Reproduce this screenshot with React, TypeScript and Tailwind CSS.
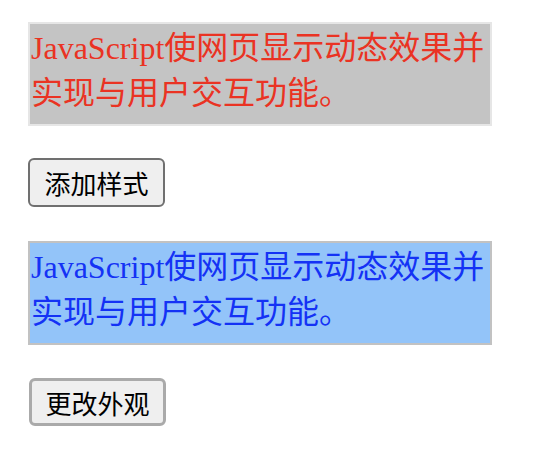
export default function App() {
  const serif = { fontFamily: '"Liberation Serif", "Noto Sans CJK SC", serif' };
  return (
    <div className="w-[556px] h-[450px] bg-white pl-[28px] pt-[22px] flex flex-col items-start">
      <div
        className="w-[464px] h-[104px] border-2 border-[#e6e6e6] bg-[#c4c4c4] text-[32px] leading-[45px] text-[#ea3323] px-[1px] pt-[2px] overflow-hidden"
        style={serif}
      >
        JavaScript使网页显示动态效果并实现与用户交互功能。
      </div>
      <button className="mt-[32px] w-[137px] h-[49px] flex items-center justify-center rounded-[6px] border-2 border-[#707070] bg-[#efefef] text-[26px] text-black font-['Noto_Sans_CJK_SC',sans-serif]">
        添加样式
      </button>
      <div
        className="mt-[34px] w-[464px] h-[104px] border-2 border-[#c2c2c2] bg-[#93c4f9] text-[32px] leading-[45px] text-[#1432f5] px-[1px] pt-[2px] overflow-hidden"
        style={serif}
      >
        JavaScript使网页显示动态效果并实现与用户交互功能。
      </div>
      <button className="mt-[33px] ml-[1px] w-[137px] h-[48px] flex items-center justify-center rounded-[6px] border-[3px] border-[#aaaaaa] bg-[#efefef] text-[26px] text-black font-['Noto_Sans_CJK_SC',sans-serif]">
        更改外观
      </button>
    </div>
  );
}
